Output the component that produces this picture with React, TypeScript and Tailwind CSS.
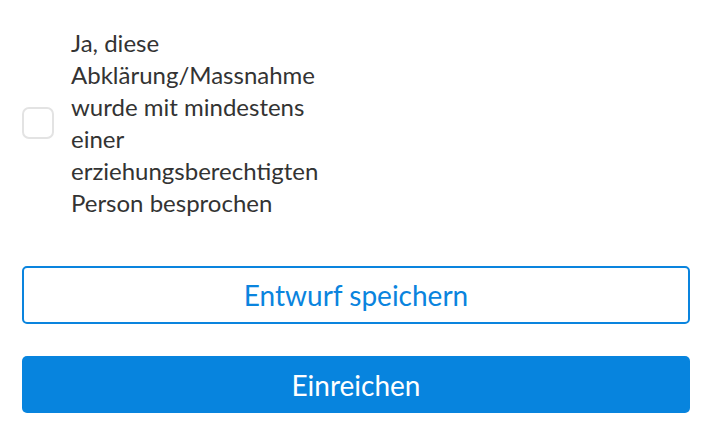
const App = () => {
  return (
    <div className="w-[720px] h-[440px] bg-white px-[22px] pt-[27px] font-['Lato','Open_Sans',sans-serif]">
      <label className="flex items-center gap-[17px]">
        <span className="w-[32px] h-[32px] shrink-0 rounded-[7px] border-2 border-[#e3e3e3] bg-white" />
        <span className="w-[262px] text-[24px] leading-[32px] text-[#333333]">
          Ja, diese Abklärung/Massnahme wurde mit mindestens einer erziehungsberechtigten Person besprochen
        </span>
      </label>
      <div className="mt-[47px] flex w-[668px] flex-col gap-[32px]">
        <button className="h-[58px] rounded-[5px] border-2 border-[#0a84de] bg-white text-[28px] text-[#0a84de]">
          Entwurf speichern
        </button>
        <button className="h-[57px] rounded-[5px] bg-[#0784de] text-[28px] text-white">
          Einreichen
        </button>
      </div>
    </div>
  );
};

export default App;
